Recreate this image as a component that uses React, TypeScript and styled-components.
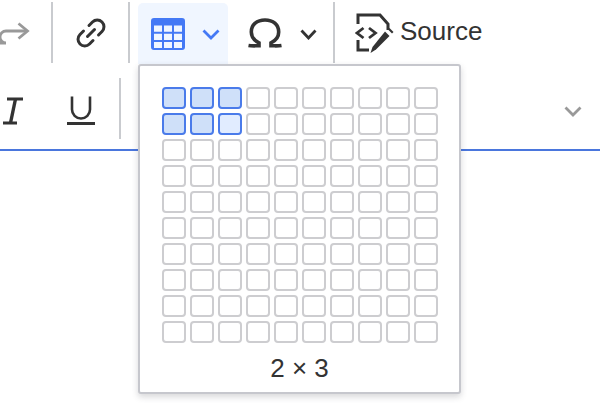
import React from "react";
import styled, { createGlobalStyle } from "styled-components";

const Global = createGlobalStyle`
  html, body { margin: 0; padding: 0; background: #fff; }
  body { font-family: "Liberation Sans", Arial, sans-serif; color: #333; }
`;

const Page = styled.div`
  position: relative;
  width: 600px;
  height: 414px;
  overflow: hidden;
  background: #fff;
`;

const Toolbar = styled.div`
  height: 151px;
  box-sizing: border-box;
  border-bottom: 2px solid #4a76dd;
  display: flex;
  flex-direction: column;
`;

const TopRow = styled.div`
  height: 64px;
  display: flex;
  align-items: flex-start;
`;

const BottomRow = styled.div`
  height: 85px;
  display: flex;
  align-items: flex-start;
  padding-top: 15px;
  box-sizing: border-box;
`;

const Separator = styled.div<{ $left: number; $h: number; $top?: number }>`
  flex: none;
  width: 2px;
  height: ${(p) => p.$h}px;
  margin-top: ${(p) => p.$top ?? 0}px;
  margin-left: ${(p) => p.$left}px;
  background: #c9cbcf;
`;

const IconSlot = styled.div<{ $w: number; $left?: number; $top: number }>`
  flex: none;
  width: ${(p) => p.$w}px;
  margin-left: ${(p) => p.$left ?? 0}px;
  margin-top: ${(p) => p.$top}px;
  display: flex;
  justify-content: center;
  svg { display: block; flex: none; }
`;

const TableButton = styled.div`
  flex: none;
  width: 90px;
  height: 61px;
  margin-left: 8px;
  margin-top: 3px;
  background: #f0f6ff;
  border-radius: 5px 5px 0 0;
  display: flex;
  align-items: flex-start;
  padding: 15px 0 0 13px;
  box-sizing: border-box;
  svg { display: block; flex: none; }
`;

const TableChevron = styled.span`
  display: block;
  margin-left: 17px;
  margin-top: 11px;
`;

const SourceLabel = styled.span`
  font-size: 26px;
  line-height: 30px;
  margin-left: 7px;
  margin-top: 16px;
  color: #333;
`;

const Panel = styled.div`
  position: absolute;
  left: 138px;
  top: 64px;
  width: 323px;
  height: 330px;
  box-sizing: border-box;
  background: #fff;
  border: 2px solid #c6c7cd;
  border-radius: 3px;
  box-shadow: 0 3px 6px rgba(60, 60, 70, 0.2);
  padding: 21px 0 0 22px;
`;

const Grid = styled.div`
  display: grid;
  grid-template-columns: repeat(10, 24px);
  grid-auto-rows: 22px;
  column-gap: 4px;
  row-gap: 4px;
`;

const Cell = styled.div<{ $on: boolean; $hover?: boolean }>`
  box-sizing: border-box;
  border-radius: 4px;
  border: 2px solid ${(p) => (p.$on ? "#4a7bea" : "#cdcdd0")};
  background: ${(p) => (p.$hover ? "#e1ecff" : p.$on ? "#cfe0f9" : "#fff")};
`;

const Size = styled.div`
  margin-left: -22px;
  margin-top: 10px;
  text-align: center;
  font-size: 26px;
  line-height: 30px;
  color: #333;
`;

const Chevron = ({ color, w = 17 }: { color: string; w?: number }) => (
  <svg width={w} height="11" viewBox={`0 0 ${w} 11`} fill="none">
    <path d={`M1.500 1.500 ${w / 2} 9 ${w - 1.5} 1.500`} stroke={color} strokeWidth="2.800" />
  </svg>
);

export default function App() {
  return (
    <Page>
      <Global />
      <Toolbar>
        <TopRow>
          <IconSlot $w={30} $top={21}>
            <svg width="30" height="24" viewBox="0 0 30 24" fill="none" stroke="#999" strokeWidth="2.800">
              <path d="M-2 22H6a6 6 0 0 1 0-12h21" />
              <path d="M18.500 2.500 27.500 10 18.500 17.500" />
            </svg>
          </IconSlot>
          <Separator $left={21} $h={61} $top={2} />
          <IconSlot $w={32} $left={22} $top={17}>
            <svg width="32" height="32" viewBox="0 0 32 32" fill="none" stroke="#333" strokeWidth="3" strokeLinecap="round">
              <path d="M14 8.500 17.500 5a6.700 6.700 0 0 1 9.500 9.500l-3.500 3.500" />
              <path d="M8.500 14 5 17.500A6.700 6.700 0 0 0 14.500 27l3.500-3.500" />
              <path d="M12.500 19.500 19.500 12.500" />
            </svg>
          </IconSlot>
          <Separator $left={21} $h={61} $top={2} />
          <TableButton>
            <svg width="34" height="32" viewBox="0 0 34 32">
              <path
                fill="#4479f5"
                fillRule="evenodd"
                d="M3 0h28a3 3 0 0 1 3 3v26a3 3 0 0 1-3 3H3a3 3 0 0 1-3-3V3a3 3 0 0 1 3-3Zm0 7.500v6.300h8V7.500Zm10 0v6.300h8V7.500Zm10 0v6.300h8V7.500ZM3 15.700V22h8v-6.300Zm10 0V22h8v-6.300Zm10 0V22h8v-6.300ZM3 23.900V30h8v-6.100Zm10 0V30h8v-6.100Zm10 0V30h8v-6.100Z"
              />
            </svg>
            <TableChevron>
              <Chevron color="#4479f5" w={18} />
            </TableChevron>
          </TableButton>
          <IconSlot $w={34} $left={20} $top={18}>
            <svg width="34" height="30" viewBox="0 0 34 30" fill="none" stroke="#333" strokeWidth="3.600">
              <path d="M0.500 27.500c3 .5 5 .3 10.500 .3v-3C6 22.500 3.300 18.500 3.300 14 3.300 6.500 9 2 17 2s13.700 4.500 13.700 12c0 4.500-2.700 8.500-7.700 10.800v3c5.500 0 7.500 .2 10.500-.3" />
            </svg>
          </IconSlot>
          <IconSlot $w={18} $left={17} $top={29}>
            <Chevron color="#333" w={17} />
          </IconSlot>
          <Separator $left={16} $h={61} $top={2} />
          <IconSlot $w={38} $left={20} $top={13}>
            <svg width="39" height="40" viewBox="0 0 39 40" fill="none" style={{ marginRight: -1 }}>
              <path d="M3 11V2h22l8 9v6M3 27v10h11" stroke="#333" strokeWidth="3" />
              <path d="M8.500 15 2 20l6.500 5M14 15l6.500 5-6.500 5" stroke="#333" strokeWidth="2.800" />
              <path d="M30 18.500 34.500 23 21 36.500 15.500 40l2-6Z" fill="#333" />
              <path d="M33 16.500l1.500-1.500 4 4-1.500 1.500Z" fill="#333" />
            </svg>
          </IconSlot>
          <SourceLabel>Source</SourceLabel>
        </TopRow>
        <BottomRow>
          <IconSlot $w={24} $top={17}>
            <svg width="24" height="30" viewBox="0 0 24 30" fill="none" stroke="#333">
              <path d="M7 3h16M3 27h14" strokeWidth="2.800" />
              <path d="M15.500 3 10.500 27" strokeWidth="3.400" />
            </svg>
          </IconSlot>
          <IconSlot $w={30} $left={42} $top={16}>
            <svg width="30" height="32" viewBox="0 0 30 32" fill="none" stroke="#333">
              <path d="M6 1.500V14.500a9 9 0 0 0 18 0V1.500" strokeWidth="2.600" />
              <path d="M1 28.500h28" strokeWidth="3" />
            </svg>
          </IconSlot>
          <Separator $left={23} $h={61} $top={-1} />
          <IconSlot $w={18} $left={443} $top={27}>
            <Chevron color="#999" w={18} />
          </IconSlot>
        </BottomRow>
      </Toolbar>
      <Panel>
        <Grid>
          {Array.from({ length: 100 }, (_, i) => {
            const r = Math.floor(i / 10);
            const c = i % 10;
            return <Cell key={i} $on={r < 2 && c < 3} $hover={r === 1 && c === 2} />;
          })}
        </Grid>
        <Size>2 × 3</Size>
      </Panel>
    </Page>
  );
}
